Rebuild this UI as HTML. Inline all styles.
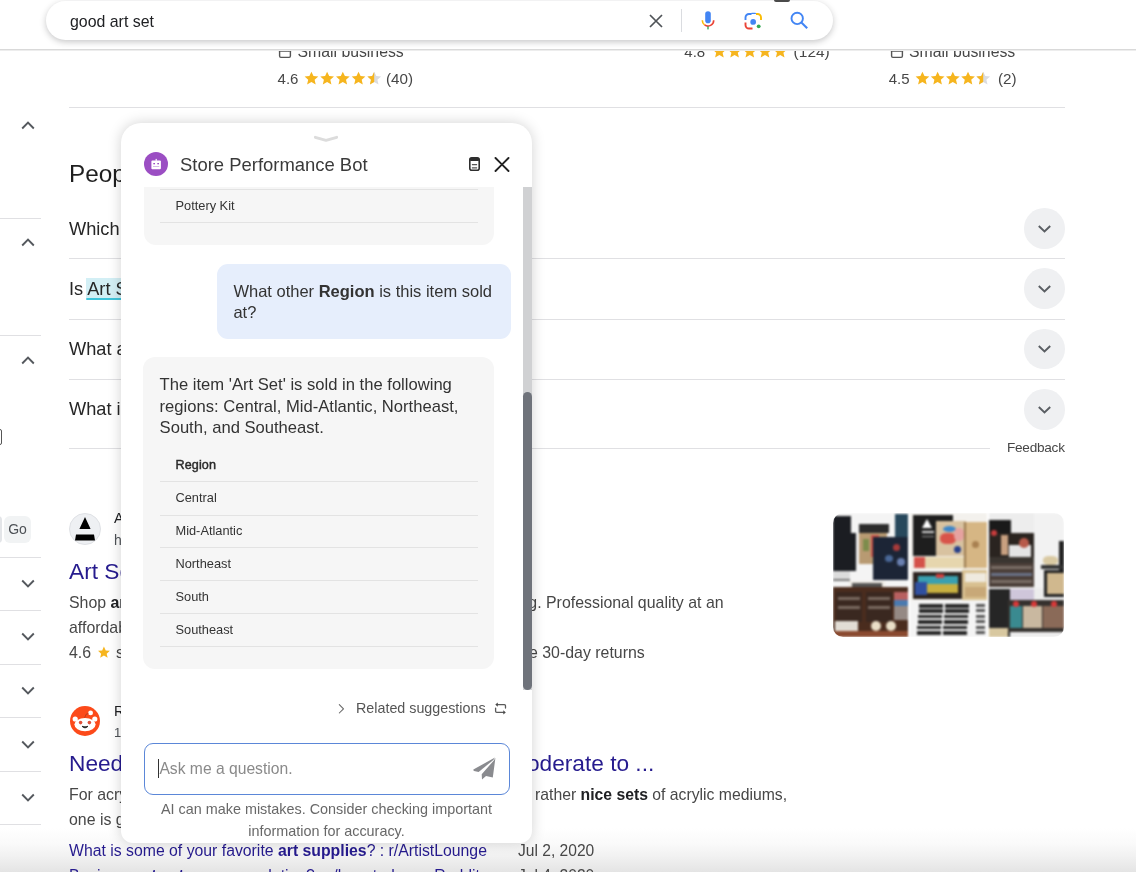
<!DOCTYPE html>
<html><head><meta charset="utf-8">
<style>
*{box-sizing:border-box;margin:0;padding:0}
html,body{width:1136px;height:872px;overflow:hidden;background:#fff;font-family:"Liberation Sans",sans-serif;color:#202124}
.a{position:absolute;white-space:nowrap}
#hdr{position:absolute;left:0;top:0;width:1136px;height:50px;background:#fff;border-bottom:1px solid #d9d9d9;z-index:5;box-shadow:0 1px 0 #ededed}
#sb{position:absolute;left:46px;top:1px;width:787px;height:39px;border-radius:20px;background:#fff;box-shadow:0 2px 6px rgba(32,33,36,.25)}
.sep{position:absolute;height:1px;background:#e0e0e3}
.chev{position:absolute;width:40.6px;height:40.6px;border-radius:50%;background:#eff0f2}
.chev svg{position:absolute;left:11.8px;top:11.8px}
.q{position:absolute;left:69px;font-size:18.2px;line-height:20px;color:#262626;white-space:nowrap}
.snip{position:absolute;font-size:15.9px;line-height:20px;color:#474747;white-space:nowrap}
.ttl{position:absolute;font-size:22.7px;line-height:24px;color:#261b8e;white-space:nowrap}
.lc{position:absolute;left:21px}
#panel{position:absolute;left:121px;top:123px;width:411px;height:720px;background:#fff;border-radius:20px 20px 12px 12px;box-shadow:0 0 14px rgba(0,0,0,.18);z-index:10;overflow:hidden}
#pin{position:absolute;left:-1px;top:0;width:413px;height:721px}
.p{position:absolute;white-space:nowrap}
.row{position:absolute;left:40px;width:318px;height:1px;background:#e3e3e3}
.cell{position:absolute;left:55.5px;font-size:12.8px;line-height:12.8px;color:#333}
#fade{position:absolute;left:0;top:828px;width:1136px;height:44px;background:linear-gradient(to bottom,#fff 0%,#fafafa 35%,#f1f1f1 65%,#e4e4e4 100%)}
.th i{position:absolute;display:block}
.th .a{filter:blur(1px)}
html{will-change:transform}
</style></head><body>

<svg width="0" height="0" style="position:absolute">
  <defs>
    
    <clipPath id="halfc"><rect x="0" y="0" width="7.4" height="15"/></clipPath>
  </defs>
</svg>

<div id="fade"></div>
<!-- header -->
<div id="hdr">
  <div id="sb">
    <div class="a" style="left:24px;top:11.8px;font-size:15.9px;line-height:18px;color:#202124">good art set</div>
    <!-- clear X -->
    <svg class="a" style="left:603px;top:13.0px" width="14" height="14" viewBox="0 0 14 14"><path d="M1 1 L13 13 M13 1 L1 13" stroke="#4f5357" stroke-width="1.7"/></svg>
    <div class="a" style="left:635px;top:8.0px;width:1px;height:23px;background:#dadce0"></div>
    <!-- mic -->
    <svg class="a" style="left:653.5px;top:9.0px" width="16" height="21" viewBox="0 0 16 21">
      <rect x="5.2" y="1.3" width="5.6" height="11.9" rx="2.8" fill="#4285f4"/>
      <path d="M2.3 10.2 A5.7 5.7 0 0 0 4.6 14.9" stroke="#fbbc04" stroke-width="1.6" fill="none"/>
      <path d="M4.6 14.9 A5.7 5.7 0 0 0 13.7 10.2" stroke="#ea4335" stroke-width="1.6" fill="none"/>
      <rect x="7.3" y="16.4" width="1.4" height="3" fill="#34a853"/>
    </svg>
    <!-- lens -->
    <svg class="a" style="left:697.5px;top:11.0px" width="19" height="19" viewBox="0 0 19 19">
      <path d="M1.5 8 V5.5 A3.5 3.5 0 0 1 5 2 H7.5" stroke="#4285f4" stroke-width="1.9" fill="none"/>
      <path d="M6.5 2 L7.6 0.8 H11.4 L12.5 2 Z" fill="#4285f4"/>
      <path d="M12 2 H13.5 A3.5 3.5 0 0 1 17 5.5 V8" stroke="#fbbc04" stroke-width="1.9" fill="none"/>
      <path d="M1.5 10.5 V13 A3.5 3.5 0 0 0 5 16.5 H8.5" stroke="#ea4335" stroke-width="1.9" fill="none"/>
      <circle cx="9.2" cy="9.9" r="2.9" fill="#4285f4"/>
      <circle cx="14.7" cy="14.3" r="1.9" fill="#34a853"/>
    </svg>
    <!-- search -->
    <svg class="a" style="left:743px;top:9.0px" width="20" height="20" viewBox="0 0 20 20"><circle cx="8.2" cy="8.4" r="5.7" stroke="#4285f4" stroke-width="1.9" fill="none"/><path d="M12.4 12.6 L18.2 18.2" stroke="#4285f4" stroke-width="2.1"/></svg>
  </div>
  <div class="a" style="left:774px;top:0;width:16px;height:1.5px;background:#4a4a4a;border-radius:0 0 2px 2px"></div>
</div>

<!-- top product row (clipped) -->
<svg class="a" style="left:278px;top:46px" width="14" height="13" viewBox="0 0 14 13"><path d="M1.6 5 V10.1 Q1.6 11.4 2.9 11.4 H11.1 Q12.4 11.4 12.4 10.1 V5" stroke="#555" stroke-width="1.4" fill="none"/><path d="M0.9 3.5 H13.1 V5.6 Q12.1 6.5 11.1 5.6 Q10.1 6.5 9 5.6 Q8 6.5 7 5.6 Q6 6.5 5 5.6 Q4 6.5 3 5.6 Q1.9 6.5 0.9 5.6 Z" fill="#555"/></svg>
<div class="a" style="left:297.5px;top:43.2px;font-size:15.8px;line-height:18px;color:#474747">Small business</div>
<div class="a" style="left:277.6px;top:70px;font-size:15px;line-height:18px;color:#474747">4.6</div>
<svg class="a" style="left:303.5px;top:71px" width="80" height="15" viewBox="0 0 80 15">
  <path transform="translate(0 0)" d="M7.4 0.7 L9.5 5.1 L14.3 5.6 L10.6 8.8 L11.7 13.6 L7.4 11.1 L3.1 13.6 L4.2 8.8 L0.6 5.6 L5.4 5.1 Z" fill="#f6b51e"/><path transform="translate(15.7 0)" d="M7.4 0.7 L9.5 5.1 L14.3 5.6 L10.6 8.8 L11.7 13.6 L7.4 11.1 L3.1 13.6 L4.2 8.8 L0.6 5.6 L5.4 5.1 Z" fill="#f6b51e"/><path transform="translate(31.4 0)" d="M7.4 0.7 L9.5 5.1 L14.3 5.6 L10.6 8.8 L11.7 13.6 L7.4 11.1 L3.1 13.6 L4.2 8.8 L0.6 5.6 L5.4 5.1 Z" fill="#f6b51e"/><path transform="translate(47.1 0)" d="M7.4 0.7 L9.5 5.1 L14.3 5.6 L10.6 8.8 L11.7 13.6 L7.4 11.1 L3.1 13.6 L4.2 8.8 L0.6 5.6 L5.4 5.1 Z" fill="#f6b51e"/>
  <path transform="translate(62.8 0)" d="M7.4 0.7 L9.5 5.1 L14.3 5.6 L10.6 8.8 L11.7 13.6 L7.4 11.1 L3.1 13.6 L4.2 8.8 L0.6 5.6 L5.4 5.1 Z" fill="#dadce0"/><g clip-path="url(#halfc)" transform="translate(62.8 0)"><path d="M7.4 0.7 L9.5 5.1 L14.3 5.6 L10.6 8.8 L11.7 13.6 L7.4 11.1 L3.1 13.6 L4.2 8.8 L0.6 5.6 L5.4 5.1 Z" fill="#f6b51e"/></g>
</svg>
<div class="a" style="left:386px;top:70px;font-size:15.2px;line-height:18px;color:#474747">(40)</div>

<div class="a" style="left:684.3px;top:43px;font-size:15px;line-height:18px;color:#474747">4.8</div>
<svg class="a" style="left:712px;top:44px" width="80" height="15" viewBox="0 0 80 15">
  <path transform="translate(0 0)" d="M7.4 0.7 L9.5 5.1 L14.3 5.6 L10.6 8.8 L11.7 13.6 L7.4 11.1 L3.1 13.6 L4.2 8.8 L0.6 5.6 L5.4 5.1 Z" fill="#f6b51e"/><path transform="translate(15.2 0)" d="M7.4 0.7 L9.5 5.1 L14.3 5.6 L10.6 8.8 L11.7 13.6 L7.4 11.1 L3.1 13.6 L4.2 8.8 L0.6 5.6 L5.4 5.1 Z" fill="#f6b51e"/><path transform="translate(30.4 0)" d="M7.4 0.7 L9.5 5.1 L14.3 5.6 L10.6 8.8 L11.7 13.6 L7.4 11.1 L3.1 13.6 L4.2 8.8 L0.6 5.6 L5.4 5.1 Z" fill="#f6b51e"/><path transform="translate(45.6 0)" d="M7.4 0.7 L9.5 5.1 L14.3 5.6 L10.6 8.8 L11.7 13.6 L7.4 11.1 L3.1 13.6 L4.2 8.8 L0.6 5.6 L5.4 5.1 Z" fill="#f6b51e"/><path transform="translate(60.8 0)" d="M7.4 0.7 L9.5 5.1 L14.3 5.6 L10.6 8.8 L11.7 13.6 L7.4 11.1 L3.1 13.6 L4.2 8.8 L0.6 5.6 L5.4 5.1 Z" fill="#f6b51e"/>
</svg>
<div class="a" style="left:793.6px;top:43px;font-size:15.5px;line-height:18px;color:#474747">(124)</div>

<svg class="a" style="left:890px;top:46px" width="14" height="13" viewBox="0 0 14 13"><path d="M1.6 5 V10.1 Q1.6 11.4 2.9 11.4 H11.1 Q12.4 11.4 12.4 10.1 V5" stroke="#555" stroke-width="1.4" fill="none"/><path d="M0.9 3.5 H13.1 V5.6 Q12.1 6.5 11.1 5.6 Q10.1 6.5 9 5.6 Q8 6.5 7 5.6 Q6 6.5 5 5.6 Q4 6.5 3 5.6 Q1.9 6.5 0.9 5.6 Z" fill="#555"/></svg>
<div class="a" style="left:909px;top:43.2px;font-size:15.8px;line-height:18px;color:#474747">Small business</div>
<div class="a" style="left:888.7px;top:70px;font-size:15px;line-height:18px;color:#474747">4.5</div>
<svg class="a" style="left:915px;top:71px" width="80" height="15" viewBox="0 0 80 15">
  <path transform="translate(0 0)" d="M7.4 0.7 L9.5 5.1 L14.3 5.6 L10.6 8.8 L11.7 13.6 L7.4 11.1 L3.1 13.6 L4.2 8.8 L0.6 5.6 L5.4 5.1 Z" fill="#f6b51e"/><path transform="translate(15.2 0)" d="M7.4 0.7 L9.5 5.1 L14.3 5.6 L10.6 8.8 L11.7 13.6 L7.4 11.1 L3.1 13.6 L4.2 8.8 L0.6 5.6 L5.4 5.1 Z" fill="#f6b51e"/><path transform="translate(30.4 0)" d="M7.4 0.7 L9.5 5.1 L14.3 5.6 L10.6 8.8 L11.7 13.6 L7.4 11.1 L3.1 13.6 L4.2 8.8 L0.6 5.6 L5.4 5.1 Z" fill="#f6b51e"/><path transform="translate(45.6 0)" d="M7.4 0.7 L9.5 5.1 L14.3 5.6 L10.6 8.8 L11.7 13.6 L7.4 11.1 L3.1 13.6 L4.2 8.8 L0.6 5.6 L5.4 5.1 Z" fill="#f6b51e"/>
  <path transform="translate(60.8 0)" d="M7.4 0.7 L9.5 5.1 L14.3 5.6 L10.6 8.8 L11.7 13.6 L7.4 11.1 L3.1 13.6 L4.2 8.8 L0.6 5.6 L5.4 5.1 Z" fill="#dadce0"/><g clip-path="url(#halfc)" transform="translate(60.8 0)"><path d="M7.4 0.7 L9.5 5.1 L14.3 5.6 L10.6 8.8 L11.7 13.6 L7.4 11.1 L3.1 13.6 L4.2 8.8 L0.6 5.6 L5.4 5.1 Z" fill="#f6b51e"/></g>
</svg>
<div class="a" style="left:998px;top:70px;font-size:15.2px;line-height:18px;color:#474747">(2)</div>

<div class="sep" style="left:69px;top:107px;width:996px"></div>

<!-- left column -->
<div class="sep" style="left:0;top:218px;width:41px"></div>
<div class="sep" style="left:0;top:335px;width:41px"></div>
<div class="sep" style="left:0;top:557px;width:41px"></div>
<div class="sep" style="left:0;top:610px;width:41px"></div>
<div class="sep" style="left:0;top:664px;width:41px"></div>
<div class="sep" style="left:0;top:717px;width:41px"></div>
<div class="sep" style="left:0;top:771px;width:41px"></div>
<div class="sep" style="left:0;top:824px;width:41px"></div>
<svg class="lc" style="top:119px" width="14" height="12" viewBox="0 0 14 12"><path d="M1.2 9.5 L7 3.7 L12.8 9.5" stroke="#54585d" stroke-width="1.9" fill="none"/></svg>
<svg class="lc" style="top:236px" width="14" height="12" viewBox="0 0 14 12"><path d="M1.2 9.5 L7 3.7 L12.8 9.5" stroke="#54585d" stroke-width="1.9" fill="none"/></svg>
<svg class="lc" style="top:354px" width="14" height="12" viewBox="0 0 14 12"><path d="M1.2 9.5 L7 3.7 L12.8 9.5" stroke="#54585d" stroke-width="1.9" fill="none"/></svg>
<svg class="lc" style="top:578px" width="14" height="12" viewBox="0 0 14 12"><path d="M1.2 2.5 L7 8.3 L12.8 2.5" stroke="#54585d" stroke-width="1.9" fill="none"/></svg>
<svg class="lc" style="top:631px" width="14" height="12" viewBox="0 0 14 12"><path d="M1.2 2.5 L7 8.3 L12.8 2.5" stroke="#54585d" stroke-width="1.9" fill="none"/></svg>
<svg class="lc" style="top:685px" width="14" height="12" viewBox="0 0 14 12"><path d="M1.2 2.5 L7 8.3 L12.8 2.5" stroke="#54585d" stroke-width="1.9" fill="none"/></svg>
<svg class="lc" style="top:739px" width="14" height="12" viewBox="0 0 14 12"><path d="M1.2 2.5 L7 8.3 L12.8 2.5" stroke="#54585d" stroke-width="1.9" fill="none"/></svg>
<svg class="lc" style="top:792px" width="14" height="12" viewBox="0 0 14 12"><path d="M1.2 2.5 L7 8.3 L12.8 2.5" stroke="#54585d" stroke-width="1.9" fill="none"/></svg>
<div class="a" style="left:-8px;top:429px;width:10px;height:16px;border:1px solid #555;border-radius:2px"></div>
<div class="a" style="left:-8px;top:516px;width:10px;height:27px;background:#e3e5e8;border-radius:4px"></div>
<div class="a" style="left:4px;top:516px;width:27px;height:27px;border-radius:6px;background:#f1f3f4;font-size:14px;color:#4d5156;text-align:center;line-height:27px">Go</div>

<!-- PAA -->
<div class="a" style="left:69px;top:161.3px;font-size:24.3px;line-height:26px;color:#1f1f1f">People also ask</div>
<div class="q" style="top:218.5px">Which</div>
<div class="a" style="left:85.6px;top:277.7px;width:40px;height:20px;background:#d3eff5"></div><div class="a" style="left:85.6px;top:297.7px;width:40px;height:2.8px;background:#40c4da;border-radius:1px"></div>
<div class="q" style="top:279px">Is Art Set</div>
<div class="q" style="top:339px">What are</div>
<div class="q" style="top:399px">What is</div>
<div class="sep" style="left:69px;top:258px;width:996px"></div>
<div class="sep" style="left:69px;top:319px;width:996px"></div>
<div class="sep" style="left:69px;top:379px;width:996px"></div>
<div class="sep" style="left:69px;top:448px;width:921px"></div>
<div class="chev" style="left:1024px;top:208px"><svg width="17" height="17" viewBox="0 0 17 17"><path d="M2.8 6 L8.5 11.5 L14.2 6" stroke="#5a5e63" stroke-width="1.9" fill="none"/></svg></div>
<div class="chev" style="left:1024px;top:268px"><svg width="17" height="17" viewBox="0 0 17 17"><path d="M2.8 6 L8.5 11.5 L14.2 6" stroke="#5a5e63" stroke-width="1.9" fill="none"/></svg></div>
<div class="chev" style="left:1024px;top:328.5px"><svg width="17" height="17" viewBox="0 0 17 17"><path d="M2.8 6 L8.5 11.5 L14.2 6" stroke="#5a5e63" stroke-width="1.9" fill="none"/></svg></div>
<div class="chev" style="left:1024px;top:389px"><svg width="17" height="17" viewBox="0 0 17 17"><path d="M2.8 6 L8.5 11.5 L14.2 6" stroke="#5a5e63" stroke-width="1.9" fill="none"/></svg></div>
<div class="a" style="left:1007px;top:441px;font-size:13.6px;line-height:13.6px;letter-spacing:-0.25px;color:#474747">Feedback</div>

<!-- result 1 -->
<div class="a" style="left:69px;top:513px;width:32px;height:32px;border-radius:50%;background:#eef0f3;border:1px solid #dfe1e5"></div>
<svg class="a" style="left:69px;top:513px" width="32" height="32" viewBox="0 0 32 32"><path d="M16 4 L21.6 16 H10.4 Z" fill="#000"/><path d="M7 21.5 H25 L26 27.5 H6 Z" fill="#000"/></svg>
<div class="a" style="left:114px;top:510px;font-size:14.5px;line-height:16px;color:#202124">Art</div>
<div class="a" style="left:114px;top:532.9px;font-size:14px;line-height:14px;color:#4d5156">hobb</div>
<div class="ttl" style="left:69px;top:558.8px">Art Sets</div>
<div class="snip" style="left:69px;top:593px">Shop <b style="color:#202124">art</b></div>
<div class="snip" style="left:69px;top:618px">affordable</div>
<div class="snip" style="left:69px;top:643px">4.6 <svg width="14" height="13" viewBox="0 0 15 15" style="vertical-align:-1px;margin:0 1px"><path d="M7.4 0.7 L9.5 5.1 L14.3 5.6 L10.6 8.8 L11.7 13.6 L7.4 11.1 L3.1 13.6 L4.2 8.8 L0.6 5.6 L5.4 5.1 Z" fill="#f6b51e"/></svg> stars</div>
<div class="snip" style="left:519.5px;top:593px">ng. Professional quality at an</div>
<div class="snip" style="left:529px;top:643px">e 30-day returns</div>

<!-- thumbnails -->
<div class="a th" style="left:833px;top:513px;width:231px;height:124px;border-radius:10px;overflow:hidden;background:#fff">
  <div class="a th" style="left:0;top:0;width:75px;height:124px;overflow:hidden"><i style="left:0px;top:0px;width:75px;height:124px;background:#f4f4f4;"></i><i style="left:0px;top:3px;width:18px;height:20px;background:#1b1d22;"></i><i style="left:0px;top:20px;width:23px;height:38px;background:#1b1d22;"></i><i style="left:0px;top:58px;width:17px;height:9px;background:#dcdcdc;"></i><i style="left:0px;top:66px;width:17px;height:2px;background:#7a7a7a;"></i><i style="left:26px;top:11px;width:30px;height:9px;background:#2b2b2b;"></i><i style="left:26px;top:20px;width:28px;height:31px;background:#b89a72;"></i><i style="left:30px;top:26px;width:6px;height:12px;background:#7d8c4c;"></i><i style="left:38px;top:22px;width:8px;height:22px;background:#c85048;"></i><i style="left:40px;top:24px;width:35px;height:43px;background:#1c2536;"></i><i style="left:60px;top:31px;width:7px;height:7px;background:#a83a3a;border-radius:50%"></i><i style="left:52px;top:42px;width:8px;height:7px;background:#4a6898;border-radius:50%"></i><i style="left:64px;top:45px;width:8px;height:8px;background:#6a80b0;border-radius:50%"></i><i style="left:62px;top:1px;width:13px;height:23px;background:#27485c;"></i><i style="left:16px;top:68px;width:36px;height:10px;background:#f0ece6;"></i><i style="left:19px;top:70px;width:30px;height:6px;background:#2e2e2e;opacity:.8"></i><i style="left:0px;top:74px;width:75px;height:50px;background:#4a2c1e;"></i><i style="left:3px;top:79px;width:26px;height:30px;background:#3a2820;"></i><i style="left:5px;top:84px;width:22px;height:3px;background:#7a6a60;"></i><i style="left:5px;top:93px;width:22px;height:3px;background:#7a6a60;"></i><i style="left:33px;top:79px;width:26px;height:30px;background:#3a2820;"></i><i style="left:35px;top:84px;width:22px;height:3px;background:#7a6a60;"></i><i style="left:35px;top:93px;width:22px;height:3px;background:#7a6a60;"></i><i style="left:61px;top:79px;width:14px;height:8px;background:#b86060;"></i><i style="left:61px;top:87px;width:14px;height:6px;background:#4a7ab0;"></i><i style="left:61px;top:93px;width:14px;height:14px;background:#c8c8c8;opacity:.6"></i><i style="left:2px;top:108px;width:23px;height:10px;background:#e2ddd5;"></i><i style="left:38px;top:108px;width:10px;height:10px;background:#eadfc8;border-radius:50%"></i><i style="left:53px;top:108px;width:10px;height:10px;background:#eadfc8;border-radius:50%"></i><i style="left:0px;top:118px;width:75px;height:6px;background:#8a4a30;"></i></div>
  <div class="a th" style="left:77px;top:0;width:77px;height:124px;overflow:hidden"><i style="left:0px;top:0px;width:77px;height:124px;background:#f3f1ed;"></i><i style="left:3px;top:2px;width:40px;height:41px;background:#1e1e1e;"></i><i style="left:12px;top:6px;width:0;height:0;border-left:5px solid transparent;border-right:5px solid transparent;border-bottom:9px solid #fff"></i><i style="left:12px;top:18px;width:12px;height:2px;background:#ddd;"></i><i style="left:12px;top:23px;width:12px;height:1px;background:#999;"></i><i style="left:26px;top:8px;width:30px;height:35px;background:#d8c2a0;"></i><i style="left:30px;top:20px;width:16px;height:11px;background:#d8544a;border-radius:40%"></i><i style="left:33px;top:13px;width:13px;height:6px;background:#3e86c8;border-radius:50%"></i><i style="left:44px;top:15px;width:10px;height:13px;background:#e6a2a0;border-radius:40%"></i><i style="left:44px;top:33px;width:7px;height:7px;background:#28408a;border-radius:50%"></i><i style="left:4px;top:44px;width:50px;height:11px;background:#e6d6ae;"></i><i style="left:4px;top:44px;width:11px;height:11px;background:#d4524a;"></i><i style="left:54px;top:9px;width:23px;height:46px;background:#d6b684;"></i><i style="left:54px;top:9px;width:2px;height:46px;background:#9a7a50;"></i><i style="left:62px;top:28px;width:7px;height:7px;background:#a88050;border-radius:50%"></i><i style="left:3px;top:59px;width:49px;height:27px;background:#2c2420;"></i><i style="left:8px;top:63px;width:40px;height:9px;background:#3aa0b0;"></i><i style="left:16px;top:71px;width:32px;height:9px;background:#c8b040;"></i><i style="left:5px;top:69px;width:12px;height:13px;background:#3050a0;"></i><i style="left:26px;top:61px;width:8px;height:4px;background:#d04040;"></i><i style="left:52px;top:57px;width:25px;height:30px;background:#d8c090;"></i><i style="left:55px;top:60px;width:21px;height:9px;background:#efeadf;"></i><i style="left:55px;top:74px;width:21px;height:10px;background:#c8a878;"></i><i style="left:0px;top:88px;width:77px;height:36px;background:#f4f4f4;"></i><i style="left:9.0px;top:91.0px;width:24px;height:3.6px;background:#262626;"></i><i style="left:35.0px;top:91.0px;width:24px;height:3.6px;background:#262626;"></i><i style="left:66px;top:91.0px;width:9px;height:3px;background:#555;"></i><i style="left:8.5px;top:96.4px;width:24px;height:3.6px;background:#262626;"></i><i style="left:34.5px;top:96.4px;width:24px;height:3.6px;background:#262626;"></i><i style="left:66px;top:96.4px;width:9px;height:3px;background:#555;"></i><i style="left:8.0px;top:101.8px;width:24px;height:3.6px;background:#262626;"></i><i style="left:34.0px;top:101.8px;width:24px;height:3.6px;background:#262626;"></i><i style="left:66px;top:101.8px;width:9px;height:3px;background:#555;"></i><i style="left:7.5px;top:107.2px;width:24px;height:3.6px;background:#262626;"></i><i style="left:33.5px;top:107.2px;width:24px;height:3.6px;background:#262626;"></i><i style="left:66px;top:107.2px;width:9px;height:3px;background:#555;"></i><i style="left:7.0px;top:112.6px;width:24px;height:3.6px;background:#262626;"></i><i style="left:33.0px;top:112.6px;width:24px;height:3.6px;background:#262626;"></i><i style="left:66px;top:112.6px;width:9px;height:3px;background:#555;"></i><i style="left:6.5px;top:118.0px;width:24px;height:3.6px;background:#262626;"></i><i style="left:32.5px;top:118.0px;width:24px;height:3.6px;background:#262626;"></i><i style="left:66px;top:118.0px;width:9px;height:3px;background:#555;"></i></div>
  <div class="a th" style="left:156px;top:0;width:75px;height:124px;overflow:hidden"><i style="left:0px;top:0px;width:75px;height:124px;background:#ededed;"></i><i style="left:45px;top:0px;width:30px;height:75px;background:#f2f2f2;"></i><i style="left:0px;top:7px;width:22px;height:13px;background:#1a1a1a;"></i><i style="left:0px;top:20px;width:45px;height:30px;background:#2a2420;"></i><i style="left:2px;top:17px;width:6px;height:6px;background:#c83c3c;border-radius:50%"></i><i style="left:12px;top:22px;width:7px;height:20px;background:#c8a080;"></i><i style="left:20px;top:32px;width:22px;height:16px;background:#e4e4e4;"></i><i style="left:30px;top:25px;width:10px;height:10px;background:#b85a4a;border-radius:50%"></i><i style="left:0px;top:44px;width:45px;height:6px;background:#3a3530;"></i><i style="left:0px;top:50px;width:45px;height:24px;background:#4a3e38;"></i><i style="left:2px;top:53px;width:41px;height:3px;background:#7a6e66;"></i><i style="left:2px;top:60px;width:41px;height:3px;background:#6a7288;"></i><i style="left:2px;top:67px;width:41px;height:3px;background:#7a6e66;"></i><i style="left:70px;top:28px;width:5px;height:30px;background:#222;"></i><i style="left:54px;top:43px;width:15px;height:9px;background:#d9c9a2;border-radius:40%"></i><i style="left:52px;top:52px;width:22px;height:4px;background:#333;"></i><i style="left:55px;top:57px;width:20px;height:27px;background:#222;"></i><i style="left:58px;top:60px;width:17px;height:21px;background:#d0b88e;"></i><i style="left:5px;top:76px;width:40px;height:12px;background:#cfc6da;"></i><i style="left:0px;top:76px;width:21px;height:48px;background:#262626;"></i><i style="left:19px;top:87px;width:56px;height:32px;background:#35312e;"></i><i style="left:21px;top:93px;width:12px;height:22px;background:#3a8a90;"></i><i style="left:34px;top:93px;width:19px;height:22px;background:#c9b8a0;"></i><i style="left:54px;top:93px;width:21px;height:22px;background:#8a6a58;"></i><i style="left:24px;top:88px;width:6px;height:6px;background:#d83838;border-radius:50%"></i><i style="left:42px;top:88px;width:6px;height:6px;background:#d83838;border-radius:50%"></i><i style="left:62px;top:88px;width:6px;height:6px;background:#d83838;border-radius:50%"></i><i style="left:0px;top:115px;width:19px;height:9px;background:#d8c8a0;"></i></div>
</div>

<!-- result 2 -->
<svg class="a" style="left:70px;top:706px" width="30" height="30" viewBox="0 0 30 30">
  <circle cx="15" cy="15" r="15" fill="#fc4a1a"/>
  <ellipse cx="15" cy="18.6" rx="10.6" ry="6.6" fill="#fff"/>
  <circle cx="5.2" cy="13" r="2.6" fill="#fff"/><circle cx="24.8" cy="13" r="2.6" fill="#fff"/>
  <circle cx="20.6" cy="6.9" r="2.4" fill="#fff"/>
  <path d="M14.6 11.8 L16.2 8.2 L18.4 7.6" stroke="#a83a20" stroke-width="0.8" fill="none"/>
  <circle cx="10.6" cy="16.6" r="1.8" fill="#e0503a"/><circle cx="19.4" cy="16.6" r="1.8" fill="#e0503a"/>
  <path d="M12 20.3 Q15 23.4 18 20.3 Q15 21.4 12 20.3 Z" fill="#1a1a1a" stroke="#1a1a1a" stroke-width="0.8"/>
</svg>
<div class="a" style="left:114px;top:702.8px;font-size:14.5px;line-height:16px;color:#202124">Reddit</div>
<div class="a" style="left:114px;top:726px;font-size:13px;line-height:14px;color:#4d5156">1</div>
<div class="ttl" style="left:69px;top:750.8px">Need</div>
<div class="ttl" style="left:508px;top:750.8px">moderate to ...</div>
<div class="snip" style="left:69px;top:785px">For acrylics</div>
<div class="snip" style="left:69px;top:810px">one is good</div>
<div class="snip" style="left:535px;top:785.2px;font-size:15.75px">rather <b style="color:#202124">nice sets</b> of acrylic mediums,</div>
<div class="a" style="left:69px;top:841px;font-size:15.8px;line-height:20px;color:#261b8e">What is some of your favorite <b>art supplies</b>? : r/ArtistLounge</div>
<div class="a" style="left:518px;top:841.2px;font-size:15.6px;line-height:20px;color:#474747">Jul 2, 2020</div>
<div class="a" style="left:69px;top:866px;font-size:15.8px;line-height:20px;color:#261b8e">Beginner <b>art set</b> recommendation? : r/learntodraw - Reddit</div>
<div class="a" style="left:518px;top:866px;font-size:15.6px;line-height:20px;color:#474747">Jul 4, 2020</div>

<!-- chat panel -->
<div id="panel"><div id="pin">
  <svg class="p" style="left:191px;top:10px" width="30" height="10" viewBox="0 0 30 10"><path d="M4.3 4.3 L15 7.4 L25.7 4.3" stroke="#dcdcdc" stroke-width="2.8" fill="none" stroke-linecap="round" stroke-linejoin="round"/></svg>
  <div class="p" style="left:23.6px;top:28.7px;width:24.8px;height:24.8px;border-radius:50%;background:#9b4ec3"></div>
  <svg class="p" style="left:30px;top:35px" width="13" height="13" viewBox="0 0 13 13"><rect x="5.6" y="0.9" width="1.2" height="2" fill="#fff"/><rect x="1.4" y="2.6" width="9.5" height="8.6" rx="1" fill="#fff"/><rect x="3.3" y="5" width="1.7" height="1.3" fill="#9b4ec3"/><rect x="7.3" y="5" width="1.7" height="1.3" fill="#9b4ec3"/><rect x="3" y="8.1" width="6.3" height="0.9" fill="#d2b3e6"/></svg>
  <div class="p" style="left:60px;top:32.8px;font-size:18.44px;line-height:18.44px;color:#3a3a3a">Store Performance Bot</div>
  <svg class="p" style="left:349px;top:34px" width="12" height="15" viewBox="0 0 12 15"><rect x="0.8" y="0.8" width="9.4" height="12.4" rx="2" stroke="#2e2e2e" stroke-width="1.6" fill="none"/><rect x="0.8" y="0.8" width="9.4" height="3.2" rx="1.2" fill="#2e2e2e"/><line x1="2.9" y1="7.6" x2="8.1" y2="7.6" stroke="#555" stroke-width="1.1"/><line x1="2.9" y1="10.9" x2="8.1" y2="10.9" stroke="#555" stroke-width="1.1"/></svg>
  <svg class="p" style="left:374px;top:34px" width="16" height="15" viewBox="0 0 16 15"><path d="M1.5 1 L14.5 14 M14.5 1 L1.5 14" stroke="#222" stroke-width="1.9" stroke-linecap="round"/></svg>

  <div class="p" style="left:0;top:64px;width:412px;height:540px;overflow:hidden">
    <div class="p" style="left:23.5px;top:-80px;width:350px;height:138px;border-radius:12px;background:#f6f6f6"></div>
    <div class="row" style="top:1.8px"></div>
    <div class="cell" style="top:12.8px">Pottery Kit</div>
    <div class="row" style="top:35.3px"></div>

    <div class="p" style="left:97px;top:77px;width:293.5px;height:75px;border-radius:11px;background:#e6eefc"></div>
    <div class="p" style="left:113.4px;top:94px;font-size:16.5px;line-height:21px;color:#333">What other <b>Region</b> is this item sold<br>at?</div>

    <div class="p" style="left:23px;top:170px;width:350.5px;height:312px;border-radius:12px;background:#f6f6f6"></div>
    <div class="p" style="left:39.6px;top:187.3px;font-size:16.6px;line-height:21.5px;color:#333">The item 'Art Set' is sold in the following<br>regions: Central, Mid-Atlantic, Northeast,<br>South, and Southeast.</div>
    <div class="cell" style="top:272.3px;font-size:12.6px;line-height:12.6px;color:#2a2a2a;-webkit-text-stroke:0.45px #2a2a2a;letter-spacing:0.1px">Region</div>
    <div class="row" style="top:294.2px"></div>
    <div class="cell" style="top:304.5px">Central</div>
    <div class="row" style="top:327.6px"></div>
    <div class="cell" style="top:337.5px">Mid-Atlantic</div>
    <div class="row" style="top:360.4px"></div>
    <div class="cell" style="top:370.5px">Northeast</div>
    <div class="row" style="top:393px"></div>
    <div class="cell" style="top:403.5px">South</div>
    <div class="row" style="top:426.2px"></div>
    <div class="cell" style="top:436.5px">Southeast</div>
    <div class="row" style="top:459px"></div>
  </div>

  <div class="p" style="left:403px;top:64px;width:9px;height:503px;background:#d0d1d3"></div>
  <div class="p" style="left:403.4px;top:268.8px;width:9px;height:298.2px;border-radius:4.5px;background:#6f737b"></div>

  <svg class="p" style="left:218px;top:580px" width="8" height="12" viewBox="0 0 8 12"><path d="M1.3 1.6 L5.5 5.8 L1.3 10" stroke="#666" stroke-width="1.05" fill="none" stroke-linecap="round" stroke-linejoin="round"/></svg>
  <div class="p" style="left:236px;top:578.2px;font-size:14.3px;line-height:14.3px;color:#555">Related suggestions</div>
  <svg class="p" style="left:373px;top:578px" width="16" height="15" viewBox="0 0 16 15"><path d="M3.6 3.6 H11.4 Q12.5 3.6 12.5 4.7 V7.1 M2.6 7.1 V10.3 Q2.6 11.4 3.7 11.4 H10.8" stroke="#5a5a5a" stroke-width="1.3" fill="none" stroke-linecap="round"/><path d="M4.8 1.4 L2.3 3.6 L4.8 5.8 Z M10.3 9.2 L12.8 11.4 L10.3 13.6 Z" fill="#4a4a4a"/></svg>

  <div class="p" style="left:23.5px;top:620px;width:366px;height:51.5px;border-radius:9px;border:1.5px solid #5b87d8;background:#fff"></div>
  <div class="p" style="left:38px;top:636px;width:1.3px;height:19px;background:#333"></div>
  <div class="p" style="left:39.4px;top:637.7px;font-size:15.66px;line-height:15.66px;color:#8a8a8a">Ask me a question.</div>
  <svg class="p" style="left:345px;top:627px" width="40" height="35" viewBox="0 0 40 35"><path d="M30 7.5 L8.4 19.6 Q8 20.6 9 21 L13.6 22 L28.3 10 Z" fill="#8a8b8f"/><path d="M30.4 8 L27.8 27.6 L21 26 L17 29.6 L16.7 24.2 L28.8 10.4 Z" fill="#8a8b8f"/></svg>

  <div class="p" style="left:0;width:413px;text-align:center;top:676.3px;font-size:14.4px;line-height:21.5px;color:#686868">AI can make mistakes. Consider checking important<br>information for accuracy.</div>
</div></div>

</body></html>
